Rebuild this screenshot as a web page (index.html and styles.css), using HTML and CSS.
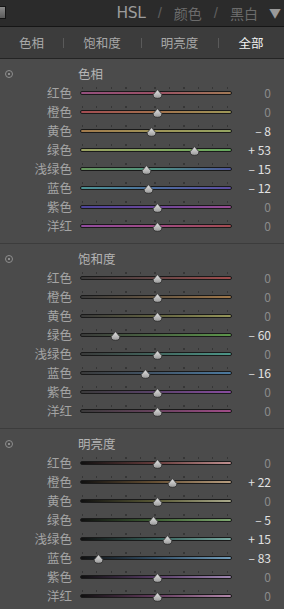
FILE: index.html
```html
<!DOCTYPE html>
<html lang="zh-CN">
<head>
    <meta charset="UTF-8">
    <title>HSL</title>
    <link rel="stylesheet" href="styles.css">
</head>
<body>
    <div class="panel">
        <div class="topbar">
            <div class="grip"></div>
            <div class="modes">
                <span class="mode on">HSL</span>
                <span class="slash">/</span>
                <span class="mode">颜色</span>
                <span class="slash">/</span>
                <span class="mode">黑白</span>
                <span class="arrow">▼</span>
            </div>
        </div>
        <div class="tabs">
            <div class="tab">色相</div>
            <div class="tab">饱和度</div>
            <div class="tab">明亮度</div>
            <div class="tab active">全部</div>
        </div>
        <div id="sections"></div>
    </div>
    <script>
        document.addEventListener('DOMContentLoaded', () => {
            const names = ['红色', '橙色', '黄色', '绿色', '浅绿色', '蓝色', '紫色', '洋红'];
            const keys = ['red', 'orange', 'yellow', 'green', 'aqua', 'blue', 'purple', 'magenta'];
            const groups = [
                { title: '色相', kind: 'hue', values: [0, 0, -8, 53, -15, -12, 0, 0] },
                { title: '饱和度', kind: 'sat', values: [0, 0, 0, -60, 0, -16, 0, 0] },
                { title: '明亮度', kind: 'lum', values: [0, 22, 0, -5, 15, -83, 0, 0] }
            ];
            const thumb = '<svg class="thumb" width="11" height="10" viewBox="0 0 11 10">' +
                '<defs><linearGradient id="tg" x1="0" y1="0" x2="0" y2="1">' +
                '<stop offset="0" stop-color="#e4e4e4"/><stop offset="1" stop-color="#9a9a9a"/></linearGradient></defs>' +
                '<path d="M5.5 0.6 L9.8 5.6 Q10.1 9.3 5.5 9.3 Q0.9 9.3 1.2 5.6 Z" fill="url(#tg)" stroke="#2a2a2a" stroke-width="0.8"/></svg>';
            const wrap = document.getElementById('sections');

            groups.forEach(group => {
                const section = document.createElement('div');
                section.className = 'section ' + group.kind;
                let html = '<div class="section-head"><span class="target"></span><span class="title">' + group.title + '</span></div>';
                group.values.forEach((v, i) => {
                    let text = '0';
                    if (v > 0) text = '+ ' + v;
                    if (v < 0) text = '\u2013 ' + Math.abs(v);
                    const left = 77 + v * 0.7 - 5.5;
                    html += '<div class="row ' + keys[i] + '">' +
                        '<span class="label">' + names[i] + '</span>' +
                        '<div class="slider"><div class="ticks"></div><div class="track"></div>' +
                        '<span class="knob" style="left:' + left + 'px">' + thumb + '</span></div>' +
                        '<span class="value' + (v !== 0 ? ' changed' : '') + '">' + text + '</span>' +
                        '</div>';
                });
                section.innerHTML = html;
                wrap.appendChild(section);
            });
        });
    </script>
</body>
</html>
```

FILE: styles.css
```css
body {
    margin: 0;
    background: #4b4b4b;
    font-family: "Noto Sans CJK SC", "Noto Sans", sans-serif;
    color: #a6a6a6;
}

.panel {
    width: 284px;
    height: 609px;
    overflow: hidden;
    background: #4b4b4b;
}

.topbar {
    height: 26px;
    background: #2b2b2b;
    border-bottom: 1px solid #161616;
    display: flex;
    justify-content: space-between;
    align-items: center;
}

.grip {
    width: 5px;
    height: 11px;
    margin-top: -2px;
    border: 1px solid #141414;
    border-left: none;
    background: linear-gradient(#8a8a8a, #5a5a5a);
}

.modes {
    display: flex;
    align-items: center;
    padding-right: 3px;
    font-size: 14px;
    color: #6b6b6b;
    line-height: 26px;
}

.mode.on {
    color: #9c9c9c;
    font-family: "DejaVu Sans", sans-serif;
    font-size: 15.5px;
    letter-spacing: -0.3px;
}

.slash {
    margin: 0 12px;
    font-family: "Liberation Sans", sans-serif;
    font-size: 15px;
    color: #5e5e5e;
}

.arrow {
    margin-left: 11px;
    font-size: 12px;
    color: #9a9a9a;
}

.tabs {
    height: 31px;
    background: #3c3c3c;
    border-bottom: 1px solid #242424;
    display: grid;
    grid-template-columns: 63px 78px 77px 1fr;
    align-items: center;
}

.tab {
    position: relative;
    text-align: center;
    font-size: 12.5px;
    color: #a8a8a8;
    line-height: 31px;
}

.tab + .tab::before {
    content: "";
    position: absolute;
    left: 0;
    top: 11px;
    height: 10px;
    border-left: 1px solid #5a5a5a;
}

.tab.active {
    color: #f2f2f2;
}

.section {
    padding: 5px 0 8px;
    border-bottom: 1px solid #3c3c3c;
}

.section-head {
    height: 19px;
    display: flex;
    align-items: center;
}

.target {
    width: 6px;
    height: 6px;
    margin-left: 5px;
    border: 1px solid #8e8e8e;
    border-radius: 50%;
    position: relative;
}

.target::after {
    content: "";
    position: absolute;
    left: 2px;
    top: 2px;
    width: 2px;
    height: 2px;
    background: #8e8e8e;
}

.title {
    margin-left: 65px;
    font-size: 12.5px;
    color: #b4b4b4;
}

.row {
    height: 19px;
    display: grid;
    grid-template-columns: 72px 152px 1fr;
    column-gap: 8px;
    align-items: center;
}

.label {
    text-align: right;
    font-size: 12.5px;
    color: #a4a4a4;
    line-height: 19px;
}

.slider {
    position: relative;
    height: 19px;
    padding-top: 4px;
    box-sizing: border-box;
}

.ticks {
    height: 2px;
    margin: 0 4px 2px 2px;
    background: repeating-linear-gradient(to right, #363636 0 1px, transparent 1px 14.5px);
}

.track {
    height: 2px;
    border: 1px solid #1a1a1a;
    border-radius: 3px;
}

.knob {
    position: absolute;
    top: 6px;
    width: 11px;
    height: 10px;
}

.thumb {
    display: block;
}

.value {
    text-align: right;
    padding-right: 13px;
    font-size: 12px;
    color: #8a8a8a;
    line-height: 19px;
}

.value.changed {
    color: #e2e2e2;
}

/* hue */
.hue .red .track { background: linear-gradient(to right, #94507e, #9a5064 50%, #a27a56); }
.hue .orange .track { background: linear-gradient(to right, #a24c52, #a2704c 50%, #9e9858); }
.hue .yellow .track { background: linear-gradient(to right, #a27a4c, #9e9458 50%, #94a462); }
.hue .green .track { background: linear-gradient(to right, #9ca262, #86a860 50%, #64a85e); }
.hue .aqua .track { background: linear-gradient(to right, #66965c, #4e9282 50%, #4c549a); }
.hue .blue .track { background: linear-gradient(to right, #4c9292, #4c6c9e 50%, #5c4ca0); }
.hue .purple .track { background: linear-gradient(to right, #4c449a, #6c469a 50%, #9a4c94); }
.hue .magenta .track { background: linear-gradient(to right, #924ca0, #a04a84 50%, #a44c50); }

/* saturation */
.sat .red .track { background: linear-gradient(to right, #3a3a3a, #664646 50%, #a04c4c); }
.sat .orange .track { background: linear-gradient(to right, #3a3a3a, #665642 50%, #a0784a); }
.sat .yellow .track { background: linear-gradient(to right, #3a3a3a, #626240 50%, #96965a); }
.sat .green .track { background: linear-gradient(to right, #3a3a3a, #4a6642 50%, #5c964a); }
.sat .aqua .track { background: linear-gradient(to right, #3a3a3a, #42665e 50%, #4c9688); }
.sat .blue .track { background: linear-gradient(to right, #3a3a3a, #42566a 50%, #4c7aa0); }
.sat .purple .track { background: linear-gradient(to right, #3a3a3a, #5a426a 50%, #884ca0); }
.sat .magenta .track { background: linear-gradient(to right, #3a3a3a, #68425e 50%, #a04c88); }

/* luminance */
.lum .red .track { background: linear-gradient(to right, #101010, #663c3c 50%, #c09090); }
.lum .orange .track { background: linear-gradient(to right, #101010, #665034 50%, #b89e80); }
.lum .yellow .track { background: linear-gradient(to right, #101010, #5a5a36 50%, #aaaa8c); }
.lum .green .track { background: linear-gradient(to right, #101010, #3e6034 50%, #80aa72); }
.lum .aqua .track { background: linear-gradient(to right, #101010, #34605a 50%, #78aaa2); }
.lum .blue .track { background: linear-gradient(to right, #101010, #345068 50%, #729cba); }
.lum .purple .track { background: linear-gradient(to right, #101010, #583c66 50%, #a088b2); }
.lum .magenta .track { background: linear-gradient(to right, #101010, #643c5e 50%, #b288aa); }
```
